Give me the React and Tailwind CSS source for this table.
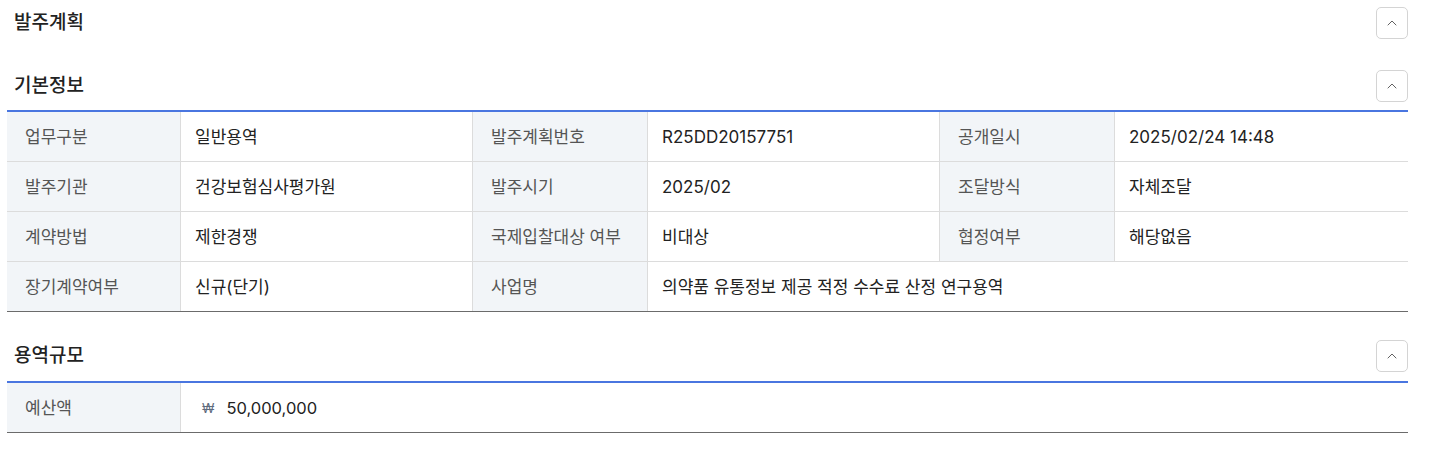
import { ChevronUp } from "lucide-react";

const basic = [
  [
    ["업무구분", "일반용역"],
    ["발주계획번호", "R25DD20157751"],
    ["공개일시", "2025/02/24 14:48"],
  ],
  [
    ["발주기관", "건강보험심사평가원"],
    ["발주시기", "2025/02"],
    ["조달방식", "자체조달"],
  ],
  [
    ["계약방법", "제한경쟁"],
    ["국제입찰대상 여부", "비대상"],
    ["협정여부", "해당없음"],
  ],
];

function ToggleButton() {
  return (
    <button className="flex h-8 w-8 items-center justify-center rounded-[5px] border border-[#d4d4d4] bg-white text-[#555]">
      <ChevronUp size={16} strokeWidth={1.4} />
    </button>
  );
}

function Header({ title, className = "" }) {
  return (
    <div className={`flex h-8 items-center justify-between ${className}`}>
      <h2 className="pl-[7px] text-[19px] font-medium text-[#222]">{title}</h2>
      <ToggleButton />
    </div>
  );
}

function Label({ children }) {
  return (
    <div className="flex h-[49px] items-center border-r border-[#dcdcdc] bg-[#f2f5f8] pl-[18px] pt-[2px] text-[17px] text-[#555]">
      {children}
    </div>
  );
}

function Value({ children, last }) {
  return (
    <div
      className={`flex h-[49px] items-center pl-[14px] pt-[2px] text-[17px] text-[#222] ${
        last ? "" : "border-r border-[#dcdcdc]"
      }`}
    >
      {children}
    </div>
  );
}

export default function App() {
  return (
    <main
      className="min-h-screen bg-white pl-[7px] pr-[25px] pt-[7px]"
      style={{ fontFamily: 'Inter, "Noto Sans CJK KR", sans-serif' }}
    >
      <Header title="발주계획" />

      <Header title="기본정보" className="mt-[31px]" />
      <div className="mt-2 border-t-2 border-b border-t-[#4a76e0] border-b-[#6b6b6b]">
        {basic.map((row, i) => (
          <div
            key={i}
            className="grid grid-cols-[174px_292px_175px_292px_175px_293px] border-b border-[#dcdcdc]"
          >
            {row.map(([k, v], j) => (
              <div key={k} className="contents">
                <Label>{k}</Label>
                <Value last={j === 2}>{v}</Value>
              </div>
            ))}
          </div>
        ))}
        <div className="grid grid-cols-[174px_292px_175px_760px]">
          <Label>장기계약여부</Label>
          <Value>신규(단기)</Value>
          <Label>사업명</Label>
          <Value last>의약품 유통정보 제공 적정 수수료 산정 연구용역</Value>
        </div>
      </div>

      <Header title="용역규모" className="mt-[28px]" />
      <div className="mt-[9px] border-t-2 border-b border-t-[#4a76e0] border-b-[#6b6b6b]">
        <div className="grid grid-cols-[174px_1227px]">
          <Label>예산액</Label>
          <div className="flex h-[49px] items-center pl-[21px] pt-[2px] text-[#222]">
            <span className="mr-[12px] text-[13px] text-[#5f6b7e]">₩</span>
            <span className="text-[16.5px]">50,000,000</span>
          </div>
        </div>
      </div>
    </main>
  );
}
